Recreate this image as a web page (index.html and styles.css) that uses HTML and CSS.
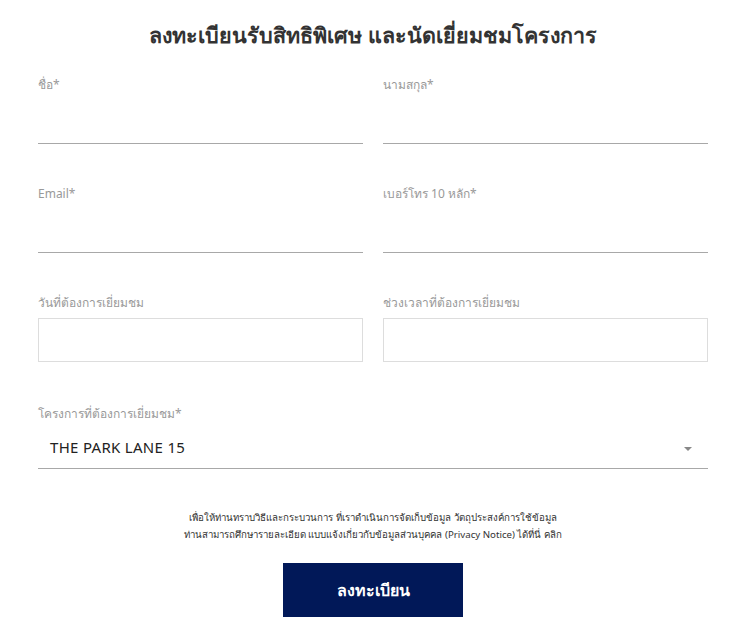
FILE: index.html
```html
<!DOCTYPE html>
<html lang="th">
<head>
<meta charset="utf-8">
<link rel="stylesheet" href="styles.css">
</head>
<body>
<div class="page">
  <h1 class="title">ลงทะเบียนรับสิทธิพิเศษ และนัดเยี่ยมชมโครงการ</h1>
  <div class="grid">
    <div class="field">
      <label class="label">ชื่อ*</label>
      <div class="line-input"></div>
    </div>
    <div class="field">
      <label class="label">นามสกุล*</label>
      <div class="line-input"></div>
    </div>
    <div class="field">
      <label class="label">Email*</label>
      <div class="line-input"></div>
    </div>
    <div class="field">
      <label class="label">เบอร์โทร 10 หลัก*</label>
      <div class="line-input"></div>
    </div>
    <div class="field">
      <label class="label">วันที่ต้องการเยี่ยมชม</label>
      <div class="box-input"></div>
    </div>
    <div class="field">
      <label class="label">ช่วงเวลาที่ต้องการเยี่ยมชม</label>
      <div class="box-input"></div>
    </div>
  </div>
  <div class="field project">
    <label class="label">โครงการที่ต้องการเยี่ยมชม*</label>
    <div class="select">
      <span class="select-value">THE PARK LANE 15</span>
      <span class="caret"></span>
    </div>
  </div>
  <p class="notice">เพื่อให้ท่านทราบวิธีและกระบวนการ ที่เราดำเนินการจัดเก็บข้อมูล วัตถุประสงค์การใช้ข้อมูล<br>ท่านสามารถศึกษารายละเอียด แบบแจ้งเกี่ยวกับข้อมูลส่วนบุคคล (Privacy Notice) ได้ที่นี่ คลิก</p>
  <div class="actions">
    <button class="submit">ลงทะเบียน</button>
  </div>
</div>
</body>
</html>
```

FILE: styles.css
```css
* { box-sizing: border-box; }
body {
  margin: 0;
  background: #fff;
  font-family: "Noto Sans", "Open Sans", sans-serif;
  color: #333;
}
.page {
  width: 748px;
  padding: 18px 40px 0 38px;
}
.title {
  margin: 0 0 23px;
  text-align: center;
  font-size: 21.5px;
  font-weight: 600;
  color: #333;
  line-height: 34px;
}
.grid {
  display: grid;
  grid-template-columns: 325px 325px;
  column-gap: 20px;
}
.field {
  display: flex;
  flex-direction: column;
}
.label {
  font-size: 12px;
  color: #999;
  line-height: 20px;
  height: 20px;
}
.line-input {
  height: 49px;
  border-bottom: 1px solid #a8a8a8;
  margin-bottom: 40px;
}
.box-input {
  margin-top: 5px;
  height: 44px;
  border: 1px solid #ddd;
  margin-bottom: 42px;
}
.project {
  width: 670px;
}
.select {
  height: 45px;
  border-bottom: 1px solid #a8a8a8;
  display: flex;
  align-items: center;
  justify-content: space-between;
  padding: 1px 16px 0 12px;
}
.select-value {
  font-size: 15px;
  color: #222;
  letter-spacing: 0.3px;
}
.caret {
  width: 0;
  height: 0;
  border-left: 4px solid transparent;
  border-right: 4px solid transparent;
  border-top: 4px solid #888;
  margin-top: 4px;
}
.notice {
  margin: 40px 0 0;
  width: 670px;
  text-align: center;
  font-size: 9.7px;
  line-height: 17px;
  color: #333;
}
.actions {
  width: 670px;
  display: flex;
  justify-content: center;
  margin-top: 20px;
}
.submit {
  width: 180px;
  height: 54px;
  border: none;
  background: #011858;
  color: #fff;
  font-family: inherit;
  font-size: 16px;
  font-weight: 700;
}
```
